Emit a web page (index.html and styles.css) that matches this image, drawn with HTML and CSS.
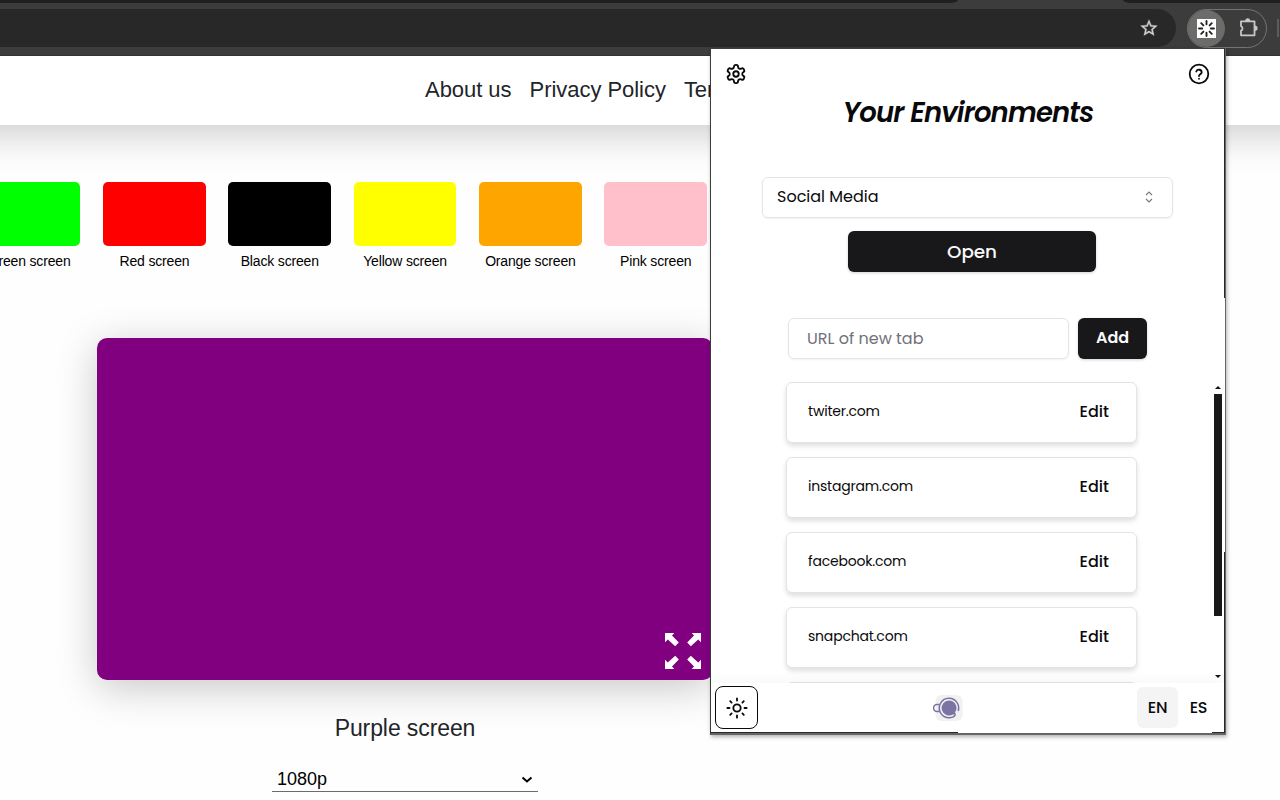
FILE: index.html
```html
<!DOCTYPE html>
<html lang="en">
<head>
<meta charset="utf-8">
<title>Your Environments</title>
<link rel="stylesheet" href="styles.css">
</head>
<body>
<header class="browser">
  <div class="tabstrip"><span class="tabs-left"></span><span class="tabs-right"></span></div>
  <div class="toolbar">
    <div class="omnibox">
      <svg width="20" height="20" viewBox="0 0 24 24" fill="#d0d0d0" stroke="#d0d0d0" stroke-width=".4"><path d="M22 9.24l-7.19-.62L12 2 9.19 8.63 2 9.24l5.46 4.73L5.82 21 12 17.27 18.18 21l-1.63-7.03L22 9.24zM12 15.4l-3.76 2.27 1-4.28-3.32-2.88 4.38-.38L12 6.1l1.71 4.04 4.38.38-3.32 2.88 1 4.28L12 15.4z"/></svg>
    </div>
    <div class="extensions">
      <span class="ext-active">
        <svg width="19" height="19" viewBox="0 0 19 19"><path fill="#fff" d="M0 0h19v19H0z"/><path d="M9.5 2v3.2M9.5 13.8V17M2 9.5h3.2M13.8 9.5H17M4.2 4.2l2.2 2.2M12.6 12.6l2.2 2.2M4.2 14.8l2.2-2.2M12.6 6.4l2.2-2.2" stroke="#222" stroke-width="1.9" stroke-linecap="round"/></svg>
      </span>
      <svg class="puzzle" width="20" height="20" viewBox="0 0 20 20" fill="none" stroke="#c7c7c7" stroke-width="1.8" stroke-linejoin="round"><path d="M15.500 3.300v14H2v-4.600a2.500 2.500 0 0 0 0-4.600V3.300z"/><path fill="#c7c7c7" stroke="none" d="M6.200 3.200a2.500 2.900 0 0 1 5 0zM15.700 7.600a2.900 2.700 0 0 1 0 5.400z"/></svg>
    </div>
    <span class="divider"></span>
  </div>
</header>
<nav class="nav"><a>About us</a><a>Privacy Policy</a><a>Terms</a></nav>
<main class="page">
  <div class="swatches">
    <div class="swatch"><i class="green"></i><span>Green screen</span></div>
    <div class="swatch"><i class="red"></i><span>Red screen</span></div>
    <div class="swatch"><i class="black"></i><span>Black screen</span></div>
    <div class="swatch"><i class="yellow"></i><span>Yellow screen</span></div>
    <div class="swatch"><i class="orange"></i><span>Orange screen</span></div>
    <div class="swatch"><i class="pink"></i><span>Pink screen</span></div>
  </div>
  <section class="preview">
    <div class="canvas">
      <svg width="36" height="36" viewBox="0 0 36 36" fill="#fff"><path id="arrow" d="M0 0h9.300L7 2.500 13.800 9.500 10.200 13.300 2.800 6.500 0 9.300z"/><use href="#arrow" transform="translate(36 0) scale(-1 1)"/><use href="#arrow" transform="translate(0 36) scale(1 -1)"/><use href="#arrow" transform="translate(36 36) scale(-1 -1)"/></svg>
    </div>
    <h2>Purple screen</h2>
    <div class="resolution"><span>1080p</span><svg width="12" height="8" viewBox="0 0 12 8" fill="none" stroke="#000" stroke-width="2"><path d="M1.500 1.500 6 5.500l4.500-4"/></svg></div>
  </section>
</main>

<aside class="popup">
  <div class="popup-top">
    <svg class="line-icon" width="22" height="22" viewBox="0 0 24 24"><path d="M12.220 2h-.44a2 2 0 0 0-2 2v.18a2 2 0 0 1-1 1.730l-.43.25a2 2 0 0 1-2 0l-.15-.08a2 2 0 0 0-2.730.73l-.22.38a2 2 0 0 0 .73 2.730l.15.1a2 2 0 0 1 1 1.720v.51a2 2 0 0 1-1 1.740l-.15.09a2 2 0 0 0-.73 2.730l.22.38a2 2 0 0 0 2.730.73l.15-.08a2 2 0 0 1 2 0l.43.25a2 2 0 0 1 1 1.730V20a2 2 0 0 0 2 2h.44a2 2 0 0 0 2-2v-.18a2 2 0 0 1 1-1.730l.43-.25a2 2 0 0 1 2 0l.15.08a2 2 0 0 0 2.730-.73l.22-.39a2 2 0 0 0-.73-2.730l-.15-.08a2 2 0 0 1-1-1.740v-.5a2 2 0 0 1 1-1.740l.15-.09a2 2 0 0 0 .73-2.730l-.22-.38a2 2 0 0 0-2.730-.73l-.15.08a2 2 0 0 1-2 0l-.43-.25a2 2 0 0 1-1-1.730V4a2 2 0 0 0-2-2z"/><circle cx="12" cy="12" r="3"/></svg>
    <svg class="line-icon thin" width="24" height="24" viewBox="0 0 24 24"><circle cx="12" cy="12" r="9.300"/><path d="M9.300 9.500a2.800 2.800 0 0 1 5.400.8c0 1.800-2.700 2.200-2.700 3.700M12 16.700v.1"/></svg>
  </div>
  <h1><span>Your Environments</span></h1>
  <div class="select"><span>Social Media</span><svg width="16" height="16" viewBox="0 0 16 16" fill="none" stroke="#777" stroke-width="1.100"><path d="m5 6 3-3 3 3M5 10l3 3 3-3"/></svg></div>
  <button class="open"><span>Open</span></button>
  <div class="add-row"><div class="input"><span>URL of new tab</span></div><button class="add">Add</button></div>
  <div class="list-area">
    <div class="list">
      <div class="item"><span>twiter.com</span><b>Edit</b></div>
      <div class="item"><span>instagram.com</span><b>Edit</b></div>
      <div class="item"><span>facebook.com</span><b>Edit</b></div>
      <div class="item"><span>snapchat.com</span><b>Edit</b></div>
      <div class="item"></div>
    </div>
    <div class="scrollbar"><i class="up"></i><i class="thumb"></i><i class="down"></i></div>
  </div>
  <footer class="popup-footer">
    <div class="theme"><svg class="line-icon" width="22" height="22" viewBox="0 0 24 24"><circle cx="12" cy="12" r="4"/><path d="M12 1.500v2.300M12 20.200v2.300M4.600 4.600l1.500 1.500M17.900 17.900l1.500 1.500M1.500 12h2.300M20.200 12h2.300M4.600 19.400l1.500-1.500M17.900 6.100l1.500-1.500"/></svg></div>
    <svg class="logo" width="30" height="28" viewBox="0 0 30 28"><rect x="2.500" y="1" width="27" height="26" rx="6" fill="#f1f1f1"/><g fill="none" stroke="#7b73a3" stroke-width="1.500"><path d="M22.500 21.200A9.700 9.700 0 1 1 25.200 17M19.500 23.100l2.200-1.100"/><path d="M6.500 10.600H4a3.400 3.400 0 0 0 0 6.800h2.500"/></g><path fill="#7b73a3" d="M16 6.500a7.500 7.500 0 1 0 4 13.900l3 .7-.9-2.800A7.500 7.500 0 0 0 16 6.500z"/></svg>
    <div class="langs"><span class="active">EN</span><span>ES</span></div>
  </footer>
  <i class="edge edge-r1"></i><i class="edge edge-r2"></i><i class="edge edge-b1"></i><i class="edge edge-b2"></i>
</aside>
</body>
</html>
```
FILE: styles.css
```css
* { box-sizing: border-box; }
body { margin: 0; width: 1280px; height: 800px; overflow: hidden; position: relative; background: #fefefe; font-family: "Liberation Sans", Arial, sans-serif; color: #212529; }
svg { display: block; flex: none; }
.browser { position: relative; z-index: 1; height: 56px; background: #3c3c3c; overflow: hidden; border-bottom: 1px solid #333; }
.tabstrip { height: 3px; display: flex; justify-content: space-between; }
.tabs-left { width: 958px; background: #1f2020; border-bottom-right-radius: 8px 3px; }
.tabs-right { width: 157px; background: #1f2020; border-bottom-left-radius: 8px 3px; }
.toolbar { height: 50px; display: flex; align-items: center; }
.omnibox { width: 1176px; height: 38px; background: #282828; border-radius: 0 19px 19px 0; display: flex; align-items: center; justify-content: flex-end; padding-right: 17px; }
.extensions { margin-left: 11px; width: 80px; height: 39px; border: 1px solid #747474; border-radius: 20px; display: flex; align-items: center; }
.ext-active { width: 37px; height: 37px; border-radius: 50%; background: #6c6c6a; display: flex; align-items: center; justify-content: center; }
.puzzle { margin-left: 14px; }
.divider { margin-left: 10px; width: 2px; height: 18px; background: #5c5c5c; }
.nav { position: relative; height: 69px; margin: 0 -60px; background: #fff; padding-left: 485px; display: flex; gap: 18px; font-size: 22px; letter-spacing: -.04px; line-height: 67px; white-space: nowrap; box-shadow: 0 8px 40px rgba(0,0,0,.21); }
.swatches { margin: 57px 0 0 -22.200px; display: flex; gap: 22.670px; }
.swatch { width: 102.670px; flex: none; text-align: center; font-size: 14px; letter-spacing: -.16px; line-height: 20px; color: #000; }
.swatch i { display: block; height: 64px; border-radius: 5px; margin-bottom: 5px; }
.green { background: #0f0; } .red { background: red; } .black { background: #000; }
.yellow { background: #ff0; } .orange { background: orange; } .pink { background: pink; }
.preview { width: 616px; margin: 67px 0 0 97px; display: flex; flex-direction: column; align-items: center; }
.canvas { width: 616px; height: 342px; background: purple; border-radius: 10px; box-shadow: 0 8px 40px rgba(0,0,0,.22); display: flex; align-items: flex-end; justify-content: flex-end; padding: 0 12px 11px 0; }
h2 { margin: 32px 0 0; font-weight: 400; font-size: 23px; line-height: 32px; letter-spacing: -.1px; }
.resolution { width: 266px; height: 29px; margin-top: 19px; border-bottom: 1px solid #6c6c6c; padding: 0 5px; font-size: 18px; line-height: 32px; color: #000; display: flex; justify-content: space-between; }
.resolution svg { margin-top: 13px; }

.popup { position: absolute; z-index: 2; left: 710px; top: 48px; width: 516px; height: 687px; background: #fff; border: 1px solid #3c3c3c; border-right-color: #666; border-bottom: 2px solid #666; box-shadow: 1px 2px 4px rgba(0,0,0,.3); font-family: Poppins, Inter, sans-serif; color: #09090b; display: flex; flex-direction: column; }
.line-icon { fill: none; stroke: #09090b; stroke-width: 2; stroke-linecap: round; stroke-linejoin: round; }
.thin { stroke-width: 1.8; }
.popup-top { height: 50px; padding: 0 14px; display: flex; justify-content: space-between; align-items: center; }
h1 { margin: 0; height: 28px; font-size: 27.5px; line-height: 28px; font-weight: 600; font-style: italic; text-align: center; letter-spacing: -.85px; white-space: nowrap; }
.select { margin: 50px 0 0 51px; width: 411px; height: 41px; border: 1px solid #e4e4e7; border-radius: 6px; box-shadow: 0 1px 2px rgba(0,0,0,.06); padding: 0 15px 2px 14px; display: flex; align-items: center; justify-content: space-between; font-size: 16px; }
button { font: inherit; border: 0; background: #18181b; color: #fafafa; border-radius: 6px; box-shadow: 0 1px 3px rgba(0,0,0,.18); padding: 0; }
.open { width: 248px; height: 41px; margin: 13px 0 0 137px; font-size: 18.4px; font-weight: 500; letter-spacing: -.1px; }
.add-row { margin: 46px 0 0 77px; display: flex; gap: 9px; }
.input { width: 281px; height: 41px; border: 1px solid #e4e4e7; border-radius: 6px; box-shadow: 0 1px 2px rgba(0,0,0,.05); padding-left: 18px; line-height: 39px; font-size: 16px; color: #71717a; }
.add { width: 69px; height: 41px; padding-bottom: 2px; font-size: 16px; font-weight: 600; letter-spacing: -.1px; }
.list-area { height: 324px; min-height: 0; overflow: hidden; display: flex; justify-content: space-between; padding: 23px 3px 0 75px; }
.list { display: flex; flex-direction: column; gap: 14px; }
.item { width: 351px; height: 61px; flex: none; border: 1px solid #e4e4e7; border-radius: 6px; background: #fff; box-shadow: 0 3px 5px rgba(0,0,0,.13); padding: 0 27px 2px 21px; display: flex; align-items: center; justify-content: space-between; font-size: 14px; letter-spacing: -.2px; }
.item b { font-size: 16px; font-weight: 500; letter-spacing: 0; }
.scrollbar { width: 8px; height: 301px; padding-top: 4px; display: flex; flex-direction: column; align-items: center; }
.up { border: 3px solid transparent; border-top: 0; border-bottom-color: #111; }
.thumb { width: 8px; height: 222px; margin-top: 5px; background: #18181b; }
.down { border: 3px solid transparent; border-bottom: 0; border-top-color: #111; margin-top: 59px; }
.popup-footer { position: relative; flex: 1; background: #fff; padding: 0 6px 1px 4px; display: flex; align-items: center; box-shadow: 0 -4px 12px rgba(0,0,0,.03); }
.theme { width: 43px; height: 43px; border: 1.500px solid #09090b; border-radius: 8px; display: flex; align-items: center; justify-content: center; }
.logo { margin-left: 175px; }
.langs { margin-left: auto; display: flex; font-size: 16px; font-weight: 500; line-height: 41px; text-align: center; }
.langs span { width: 41px; height: 41px; border-radius: 6px; letter-spacing: -.2px; }
.langs .active { background: #f4f4f5; }
.edge { position: absolute; background: #27272a; }
.edge-r1 { right: 0; top: 0; width: 1px; height: 249px; }
.edge-r2 { right: 0; bottom: 0; width: 1px; height: 181px; }
.edge-b1 { left: 0; bottom: 0; width: 247px; height: 1px; }
.edge-b2 { right: 0; bottom: 0; width: 13px; height: 1px; }
```
